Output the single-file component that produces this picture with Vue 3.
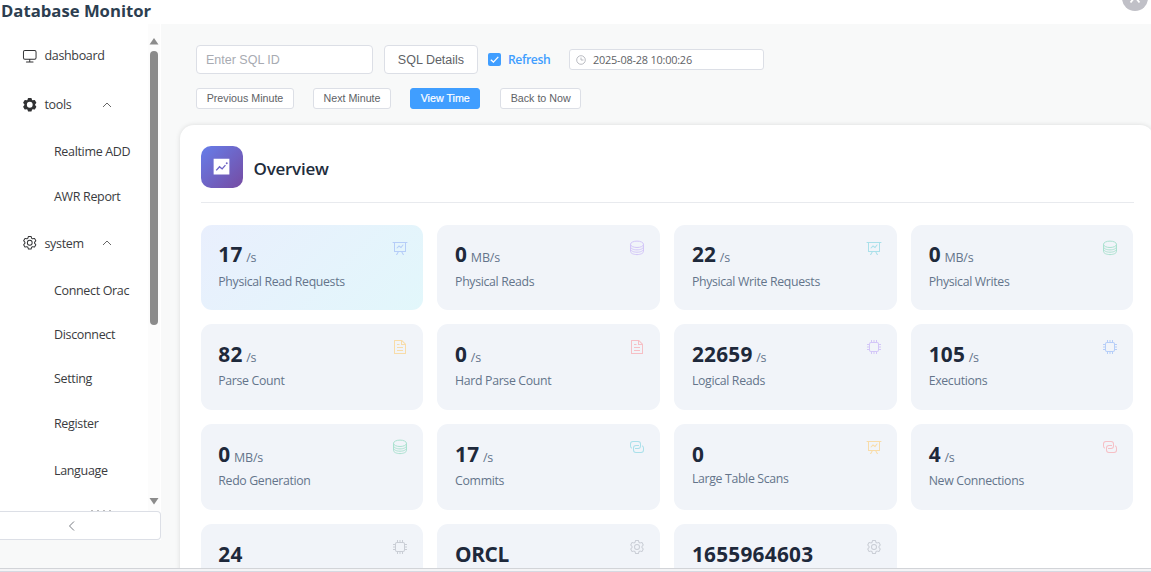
<script setup>
const gearOuter = 'M600.704 64a32 32 0 0 1 30.464 22.208l35.2 109.376c14.784 7.232 28.928 15.36 42.432 24.512l112.384-24.192a32 32 0 0 1 34.432 15.36L944.32 364.8a32 32 0 0 1-4.032 37.504l-77.12 85.12a357 357 0 0 1 0 49.024l77.12 85.248a32 32 0 0 1 4.032 37.504l-88.704 153.6a32 32 0 0 1-34.432 15.296L708.8 803.904c-13.44 9.088-27.648 17.28-42.368 24.512l-35.264 109.376A32 32 0 0 1 600.704 960H423.296a32 32 0 0 1-30.464-22.208L357.696 828.48a352 352 0 0 1-42.56-24.64l-112.32 24.256a32 32 0 0 1-34.432-15.36L79.68 659.2a32 32 0 0 1 4.032-37.504l77.12-85.248a357 357 0 0 1 0-48.896l-77.12-85.248A32 32 0 0 1 79.68 364.8l88.704-153.6a32 32 0 0 1 34.432-15.296l112.32 24.256c13.568-9.152 27.776-17.408 42.56-24.64l35.2-109.312A32 32 0 0 1 423.232 64H600.64z'
const icons = {
  board: 'M359.168 768H160a32 32 0 0 1-32-32V192H64a32 32 0 0 1 0-64h896a32 32 0 1 1 0 64h-64v544a32 32 0 0 1-32 32H665.216l110.848 192h-73.856L591.36 768H433.024L322.176 960H248.32zM832 192H192v512h640zM342.656 534.656a32 32 0 1 1-45.312-45.312L444.992 341.76l125.44 94.08L679.04 300.032a32 32 0 1 1 49.92 39.936L581.632 524.224 451.008 426.24 342.656 534.592z',
  doc: 'M832 384H576V128H192v768h640zm-26.496-64L640 154.496V320zM160 64h480l256 256v608a32 32 0 0 1-32 32H160a32 32 0 0 1-32-32V96a32 32 0 0 1 32-32m160 448h384v64H320zm0-192h160v64H320zm0 384h384v64H320z',
  cpu: 'M320 256a64 64 0 0 0-64 64v384a64 64 0 0 0 64 64h384a64 64 0 0 0 64-64V320a64 64 0 0 0-64-64zm0-64h384a128 128 0 0 1 128 128v384a128 128 0 0 1-128 128H320a128 128 0 0 1-128-128V320a128 128 0 0 1 128-128M480 64h64v128h-64zM640 64h64v128h-64zM320 64h64v128h-64zM480 832h64v128h-64zM640 832h64v128h-64zM320 832h64v128h-64zM64 480h128v64H64zM64 320h128v64H64zM64 640h128v64H64zM832 480h128v64H832zM832 320h128v64H832zM832 640h128v64H832z',
  link: 'M640 384v64H448a128 128 0 0 0-128 128v128a128 128 0 0 0 128 128h320a128 128 0 0 0 128-128V576a128 128 0 0 0-64-110.848V394.88c74.56 26.368 128 97.472 128 181.056v128a192 192 0 0 1-192 192H448a192 192 0 0 1-192-192V576a192 192 0 0 1 192-192zM384 640v-64h192a128 128 0 0 0 128-128V320a128 128 0 0 0-128-128H256a128 128 0 0 0-128 128v128a128 128 0 0 0 64 110.848v70.272A192.064 192.064 0 0 1 64 448V320a192 192 0 0 1 192-192h320a192 192 0 0 1 192 192v128a192 192 0 0 1-192 192z',
  gear: gearOuter + 'm-23.424 64H446.72l-36.352 113.088-24.512 11.968a294 294 0 0 0-34.816 20.096l-22.656 15.36-116.224-25.088-65.28 113.152 79.68 88.192-1.92 27.136a293 293 0 0 0 0 40.192l1.92 27.136-79.808 88.192 65.344 113.152 116.224-25.024 22.656 15.296a294 294 0 0 0 34.816 20.096l24.512 11.968L446.72 896h130.688l36.48-113.152 24.448-11.904a288 288 0 0 0 34.752-20.096l22.592-15.296 116.288 25.024 65.28-113.152-79.744-88.192 1.92-27.136a293 293 0 0 0 0-40.256l-1.92-27.136 79.808-88.128-65.344-113.152-116.288 24.96-22.592-15.232a288 288 0 0 0-34.752-20.096l-24.448-11.904L577.344 128zM512 320a192 192 0 1 1 0 384 192 192 0 0 1 0-384m0 64a128 128 0 1 0 0 256 128 128 0 0 0 0-256',
  tools: gearOuter + 'M512 320a192 192 0 1 0 0 384 192 192 0 0 0 0-384',
  monitor: 'M544 768v128h192a32 32 0 1 1 0 64H288a32 32 0 1 1 0-64h192V768H192A128 128 0 0 1 64 640V256a128 128 0 0 1 128-128h640a128 128 0 0 1 128 128v384a128 128 0 0 1-128 128zM192 192a64 64 0 0 0-64 64v384a64 64 0 0 0 64 64h640a64 64 0 0 0 64-64V256a64 64 0 0 0-64-64z',
}

const menu = [
  { label: 'dashboard', icon: 'monitor' },
  { label: 'tools', icon: 'tools', open: true },
  { label: 'Realtime ADD', sub: true },
  { label: 'AWR Report', sub: true },
  { label: 'system', icon: 'gear', open: true },
  { label: 'Connect Orac', sub: true },
  { label: 'Disconnect', sub: true },
  { label: 'Setting', sub: true },
  { label: 'Register', sub: true },
  { label: 'Language', sub: true, tall: true },
]

const cards = [
  { value: '17', unit: '/s', label: 'Physical Read Requests', icon: 'board', tone: 'blue', active: true },
  { value: '0', unit: 'MB/s', label: 'Physical Reads', icon: 'coin', tone: 'purple' },
  { value: '22', unit: '/s', label: 'Physical Write Requests', icon: 'board', tone: 'cyan' },
  { value: '0', unit: 'MB/s', label: 'Physical Writes', icon: 'coin', tone: 'green' },
  { value: '82', unit: '/s', label: 'Parse Count', icon: 'doc', tone: 'amber' },
  { value: '0', unit: '/s', label: 'Hard Parse Count', icon: 'doc', tone: 'red' },
  { value: '22659', unit: '/s', label: 'Logical Reads', icon: 'cpu', tone: 'purple' },
  { value: '105', unit: '/s', label: 'Executions', icon: 'cpu', tone: 'blue' },
  { value: '0', unit: 'MB/s', label: 'Redo Generation', icon: 'coin', tone: 'green' },
  { value: '17', unit: '/s', label: 'Commits', icon: 'link', tone: 'cyan' },
  { value: '0', unit: '', label: 'Large Table Scans', icon: 'board', tone: 'amber' },
  { value: '4', unit: '/s', label: 'New Connections', icon: 'link', tone: 'red' },
  { value: '24', unit: '', label: '', icon: 'cpu', tone: 'gray' },
  { value: 'ORCL', unit: '', label: '', icon: 'gear', tone: 'gray', text: true },
  { value: '1655964603', unit: '', label: '', icon: 'gear', tone: 'gray' },
]
</script>

<template>
  <div class="page">
    <aside class="sidebar">
      <h1 class="brand">Database Monitor</h1>
      <div class="scroller">
        <nav class="menu">
          <div v-for="m in menu" :key="m.label" class="item" :class="{ sub: m.sub, tall: m.tall }">
            <svg v-if="m.icon" class="item-icon" viewBox="0 0 1024 1024"><path fill-rule="evenodd" :d="icons[m.icon]" /></svg>
            <span>{{ m.label }}</span>
            <svg v-if="m.open" class="caret" viewBox="0 0 10 10"><path d="M1 7 5 3l4 4" /></svg>
          </div>
          <div class="peek"><i></i><i></i><i></i><i></i></div>
        </nav>
        <div class="track">
          <svg class="arrow" viewBox="0 0 10 8"><path d="M5 1 9.500 7.500h-9z" /></svg>
          <div class="thumb"></div>
          <svg class="arrow down" viewBox="0 0 10 8"><path d="M.5 1h9L5 7.500z" /></svg>
        </div>
      </div>
      <div class="collapse"><svg viewBox="0 0 10 12"><path d="M7 1.500 2.500 6 7 10.500" /></svg></div>
    </aside>

    <div class="main">
      <header class="topbar"><span class="avatar">
        <svg viewBox="0 0 26 26"><path d="M8.500 17.500 13 12l4.500 5.500" /></svg>
      </span></header>

      <section class="toolbar">
        <div class="line first">
          <div class="sql-input">Enter SQL ID</div>
          <button class="btn large">SQL Details</button>
          <span class="check"><svg viewBox="0 0 12 12"><path d="M2.600 6.200 5 8.400 9.500 3.600" /></svg></span>
          <span class="refresh">Refresh</span>
          <div class="time">
            <svg viewBox="0 0 10 10"><circle cx="5" cy="5" r="4.300" /><path d="M5 2.500V5h2.500" /></svg>
            <span>2025-08-28 10:00:26</span>
          </div>
        </div>
        <div class="line second">
          <button class="btn prev">Previous Minute</button>
          <button class="btn next">Next Minute</button>
          <button class="btn primary">View Time</button>
          <button class="btn now">Back to Now</button>
        </div>
      </section>

      <section class="panel">
        <div class="panel-head">
          <span class="logo">
            <svg viewBox="0 0 1024 1024"><path fill-rule="evenodd" d="M128 896V128h768v768zm291.712-327.296 128 102.400 180.160-201.792-47.744-42.624-139.840 156.608-128-102.400-180.160 201.792 47.744 42.624 139.840-156.608zM816 352a48 48 0 1 0-96 0 48 48 0 0 0 96 0" /></svg>
          </span>
          <h2>Overview</h2>
        </div>
        <div class="grid">
          <article v-for="(c, i) in cards" :key="i" class="card" :class="{ active: c.active }">
            <div class="info">
              <div class="figure" :class="{ solo: !c.unit, text: c.text }"><strong>{{ c.value }}</strong><span v-if="c.unit" class="unit">{{ c.unit }}</span></div>
              <div class="label">{{ c.label }}</div>
            </div>
            <svg v-if="c.icon === 'coin'" class="glyph coin" :class="c.tone" viewBox="0 0 16 16">
              <ellipse cx="8" cy="4.300" rx="6.500" ry="3.200" />
              <path d="M1.500 4.300v7.100c0 1.800 2.900 3.200 6.500 3.200s6.500-1.400 6.500-3.200V4.300M1.500 6.700c0 1.800 2.900 3.200 6.500 3.200s6.500-1.400 6.500-3.200M1.500 9c0 1.800 2.900 3.200 6.500 3.200s6.500-1.400 6.500-3.200" />
            </svg>
            <svg v-else class="glyph" :class="c.tone" viewBox="0 0 1024 1024"><path :d="icons[c.icon]" /></svg>
          </article>
        </div>
      </section>
    </div>
    <footer class="bottom"></footer>
  </div>
</template>

<style>
body { margin: 0; }
</style>

<style scoped>
.page { position: relative; display: flex; width: 1151px; height: 572px; overflow: hidden; background: #f8f9f9; font-family: "Open Sans", "Noto Sans", sans-serif; color: #303133; }
.sidebar { width: 161px; flex: none; height: 540px; background: #fff; display: flex; flex-direction: column; }
.brand { margin: 0; height: 24px; padding-left: 1px; font-size: 16.700px; line-height: 22px; font-weight: 700; color: #2c3e50; white-space: nowrap; }
.scroller { height: 487px; display: flex; overflow: hidden; }
.menu { width: 148px; padding-top: 6.600px; overflow: hidden; }
.item { box-sizing: border-box; height: 49.500px; padding-left: 22px; display: flex; align-items: center; font-size: 12.500px; letter-spacing: -.34px; white-space: nowrap; color: #3a3b3e; }
.item.sub { height: 44.400px; padding-left: 54px; }
.item.sub.tall { height: 49.500px; }
.item-icon { width: 15.500px; height: 15.500px; margin-right: 7px; fill: #303133; flex: none; }
.caret { width: 10px; height: 10px; margin-left: auto; margin-right: 36px; fill: none; stroke: #666; stroke-width: 1; }
.peek { margin: 15px 0 0 91px; display: flex; gap: 4px; }
.peek i { width: 2px; height: 1px; background: #bbb; }
.track { width: 12px; display: flex; flex-direction: column; align-items: center; background: #fcfcfc; padding: 13px 0 6px; box-sizing: border-box; }
.arrow { width: 10px; height: 8px; fill: #8b8b8b; }
.arrow.down { margin-top: auto; }
.thumb { width: 8px; height: 274px; margin-top: 6px; border-radius: 4px; background: #8b8b8b; }
.collapse { box-sizing: border-box; height: 29px; border: 1px solid #dcdfe6; border-left: 0; border-radius: 0 4px 4px 0; display: flex; align-items: center; justify-content: center; padding-right: 17px; background: #fff; }
.collapse svg { width: 10px; height: 12px; fill: none; stroke: #777b82; stroke-width: 1; }
.main { flex: 1; min-width: 0; display: flex; flex-direction: column; }
.topbar { height: 24px; flex: none; background: #fff; display: flex; justify-content: flex-end; padding-right: 3px; }
.avatar { width: 26px; height: 26px; margin-top: -15px; border-radius: 50%; background: #c0c0c7; }
.avatar svg { width: 26px; height: 26px; display: block; fill: none; stroke: #fff; stroke-width: 1.800; }
.toolbar { height: 100.500px; flex: none; padding: 21px 0 0 35px; box-sizing: border-box; }
.line { display: flex; align-items: center; font-family: "Liberation Sans", Arial, sans-serif; white-space: nowrap; }
.first { height: 29px; }
.second { margin-top: 14px; height: 21px; }
.sql-input { box-sizing: border-box; width: 177.400px; height: 29px; border: 1px solid #dcdfe6; border-radius: 4px; padding-left: 9px; font-size: 12.500px; line-height: 28.500px; color: #a8abb2; background: #fff; }
.btn { box-sizing: border-box; height: 21px; padding: 0; border: 1px solid #dcdfe6; border-radius: 3px; background: #fff; color: #606266; font-family: inherit; font-size: 10.700px; line-height: 19px; text-align: center; }
.btn.large { width: 94px; height: 29px; margin-left: 10.600px; border-radius: 4px; font-size: 12.500px; line-height: 28.500px; }
.prev { width: 98px; }
.next { width: 78px; margin-left: 19px; }
.primary { width: 70.400px; margin-left: 19px; background: #409eff; border-color: #409eff; color: #fff; -webkit-text-stroke: .2px #fff; }
.now { width: 81.400px; margin-left: 19.600px; }
.check { width: 13px; height: 13px; margin-left: 10px; border-radius: 2px; background: #409eff; }
.check svg { width: 13px; height: 13px; display: block; fill: none; stroke: #fff; stroke-width: 1.200; }
.refresh { width: 61px; margin-left: 7px; color: #409eff; font: 600 12.200px "Open Sans", sans-serif; letter-spacing: -.4px; }
.time { box-sizing: border-box; width: 195px; height: 21px; border: 1px solid #dcdfe6; border-radius: 3px; background: #fff; display: flex; align-items: center; padding-left: 6px; font: 10.900px "Open Sans", sans-serif; letter-spacing: -.2px; color: #606266; }
.time svg { width: 10px; height: 10px; margin-right: 7px; fill: none; stroke: #a8abb2; stroke-width: .8; }
.panel { box-sizing: border-box; width: 974px; height: 470px; flex: none; margin-left: 18.500px; padding: 21px 20px 0 21px; border-radius: 14px; background: #fff; box-shadow: 0 0 5px rgba(0, 0, 0, .12); }
.panel-head { box-sizing: border-box; height: 57.500px; border-bottom: 1px solid #e8eaee; display: flex; align-items: flex-start; }
.logo { width: 42.500px; height: 42.500px; border-radius: 10px; background: linear-gradient(135deg, #667eea, #764ba2); display: flex; align-items: center; justify-content: center; }
.logo svg { width: 21px; height: 21px; fill: #fff; }
h2 { margin: 0 0 0 10.500px; font-size: 17px; line-height: 46px; font-weight: 600; letter-spacing: -.25px; color: #1f2d3d; }
.grid { margin-top: 21.500px; display: grid; grid-template-columns: repeat(4, 222.500px); grid-auto-rows: 85.700px; gap: 14.300px; }
.card { box-sizing: border-box; padding: 17.500px 15px 0 17.800px; border-radius: 11px; background: #f1f4f9; display: flex; justify-content: space-between; align-items: flex-start; }
.card.active { background: linear-gradient(135deg, #e9effd, #e2f7fb); }
.figure { height: 29.500px; display: flex; align-items: baseline; line-height: 24px; white-space: nowrap; }
.figure.solo { height: 27.500px; }
.figure strong { font-size: 20.800px; font-weight: 700; letter-spacing: .25px; color: #1e293b; }
.figure.text strong { letter-spacing: -.4px; }
.unit { margin-left: 3.600px; font-size: 12.500px; letter-spacing: -.2px; color: #64748b; }
.label { font-size: 12.300px; line-height: 20px; letter-spacing: -.33px; color: #64748b; white-space: nowrap; }
.glyph { width: 16px; height: 16px; margin-top: -2.500px; fill: currentColor; flex: none; }
.glyph.coin { fill: none; stroke: currentColor; stroke-width: 1; }
.blue { color: #b5cdf8; }
.purple { color: #d3c6f8; }
.cyan { color: #aae0ea; }
.green { color: #abe2d0; }
.amber { color: #f8dca9; }
.red { color: #f6bfc5; }
.gray { color: #c9cdd5; }
.bottom { position: absolute; left: 0; right: 0; bottom: 0; height: 4px; box-sizing: border-box; border-top: 1px solid #d2d4d8; border-bottom: 1px solid #d6d9e2; background: #f4f4f6; }
</style>
